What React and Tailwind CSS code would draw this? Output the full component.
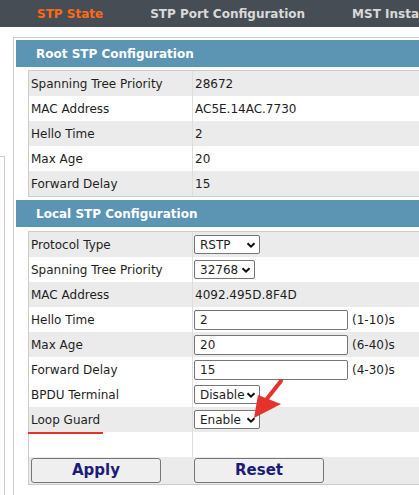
import React from 'react';

const Select = ({ value, width }) => (
  <div
    className={`flex items-center justify-between h-[19px] ${width} border border-[#767676] rounded-[2px] bg-white pl-[5px] pr-[3px]`}
  >
    <span>{value}</span>
    <svg width="10" height="10" viewBox="0 0 10 10">
      <path d="M1.5 3.2 L5 6.7 L8.5 3.2" fill="none" stroke="#111" strokeWidth="2" />
    </svg>
  </div>
);

const TextInput = ({ value }) => (
  <div className="flex items-center h-[20px] w-[154px] border border-[#767676] rounded-[2px] bg-white pl-[5px]">
    {value}
  </div>
);

const Row = ({ label, gray, children }) => (
  <div className={`flex h-[25px] ${gray ? 'bg-[#ebebeb]' : 'bg-white'}`}>
    <div className="w-[163px] flex items-center pl-[2px] shrink-0">{label}</div>
    <div className="flex-1 flex items-center border-l border-[#dedede] pl-[1px]">{children}</div>
  </div>
);

const Header = ({ title }) => (
  <div className="h-[27px] bg-[#5b95b3] flex items-center pl-[20px] text-white font-bold text-[12px]">
    {title}
  </div>
);

export default function App() {
  const root = [
    ['Spanning Tree Priority', '28672'],
    ['MAC Address', 'AC5E.14AC.7730'],
    ['Hello Time', '2'],
    ['Max Age', '20'],
    ['Forward Delay', '15'],
  ];

  return (
    <div className="relative w-[419px] h-[495px] overflow-hidden bg-white text-[12px] text-[#1e1e1e] font-['DejaVu_Sans',sans-serif]">
      {/* top tabs */}
      <div className="h-[27px] bg-[#464d55] flex items-center text-[12px] font-bold whitespace-nowrap overflow-hidden">
        <span className="ml-[37px] text-[#ff6a13]">STP State</span>
        <span className="ml-[47px] text-[#d9d9d9]">STP Port Configuration</span>
        <span className="ml-[47px] text-[#d9d9d9]">MST Insta</span>
      </div>

      <div className="flex">
        {/* left menu edge */}
        <div className="w-[5px] h-[400px] mt-[129px] border-t border-r border-[#cccccc] shrink-0"></div>

        <div className="ml-[8px] mt-[10px] flex-1 h-[470px] border-l border-t border-[#cccccc] pl-[2px] pt-[2px]">
          <Header title="Root STP Configuration" />
          <div className="ml-[12px] mt-[3px] border-t border-l border-b border-[#cccccc]">
            {root.map(([label, value], i) => (
              <Row key={label} label={label} gray={i % 2 === 0}>
                <span className="pl-[1px]">{value}</span>
              </Row>
            ))}
          </div>

          <div className="mt-[3px]">
            <Header title="Local STP Configuration" />
          </div>
          <div className="ml-[12px] mt-[4px] border-t border-l border-b border-[#cccccc]">
            <Row label="Protocol Type" gray>
              <Select value="RSTP" width="w-[66px]" />
            </Row>
            <Row label="Spanning Tree Priority">
              <Select value="32768" width="w-[61px]" />
            </Row>
            <Row label="MAC Address" gray>
              <span className="pl-[1px]">4092.495D.8F4D</span>
            </Row>
            <Row label="Hello Time">
              <TextInput value="2" />
              <span className="ml-[4px]">(1-10)s</span>
            </Row>
            <Row label="Max Age" gray>
              <TextInput value="20" />
              <span className="ml-[4px]">(6-40)s</span>
            </Row>
            <Row label="Forward Delay">
              <TextInput value="15" />
              <span className="ml-[4px]">(4-30)s</span>
            </Row>
            <Row label="BPDU Terminal">
              <Select value="Disable" width="w-[66px]" />
            </Row>
            <Row label="Loop Guard" gray>
              <Select value="Enable" width="w-[66px]" />
            </Row>
            <Row label="">
              <span></span>
            </Row>
            <div className="flex h-[27px] bg-[#ebebeb] items-center">
              <div className="w-[163px] pl-[2px] shrink-0">
                <button className="w-[130px] h-[25px] bg-[#efefef] border border-[#767676] rounded-[3px] text-[15px] font-bold text-[#1c1c78]">
                  Apply
                </button>
              </div>
              <div className="pl-[2px]">
                <button className="w-[130px] h-[25px] bg-[#efefef] border border-[#767676] rounded-[3px] text-[15px] font-bold text-[#1c1c78]">
                  Reset
                </button>
              </div>
            </div>
          </div>
        </div>
      </div>

      {/* red annotations */}
      <div className="absolute left-[28px] top-[432px] w-[75px] h-[2px] bg-[#e5322d]"></div>
      <svg className="absolute left-[245px] top-[375px]" width="50" height="50" viewBox="0 0 50 50">
        <path d="M36 6 L21 25" stroke="#e5322d" strokeWidth="4" strokeLinecap="round" fill="none" />
        <polygon points="9,43 13,20 36,29" fill="#e5322d" />
      </svg>
    </div>
  );
}
